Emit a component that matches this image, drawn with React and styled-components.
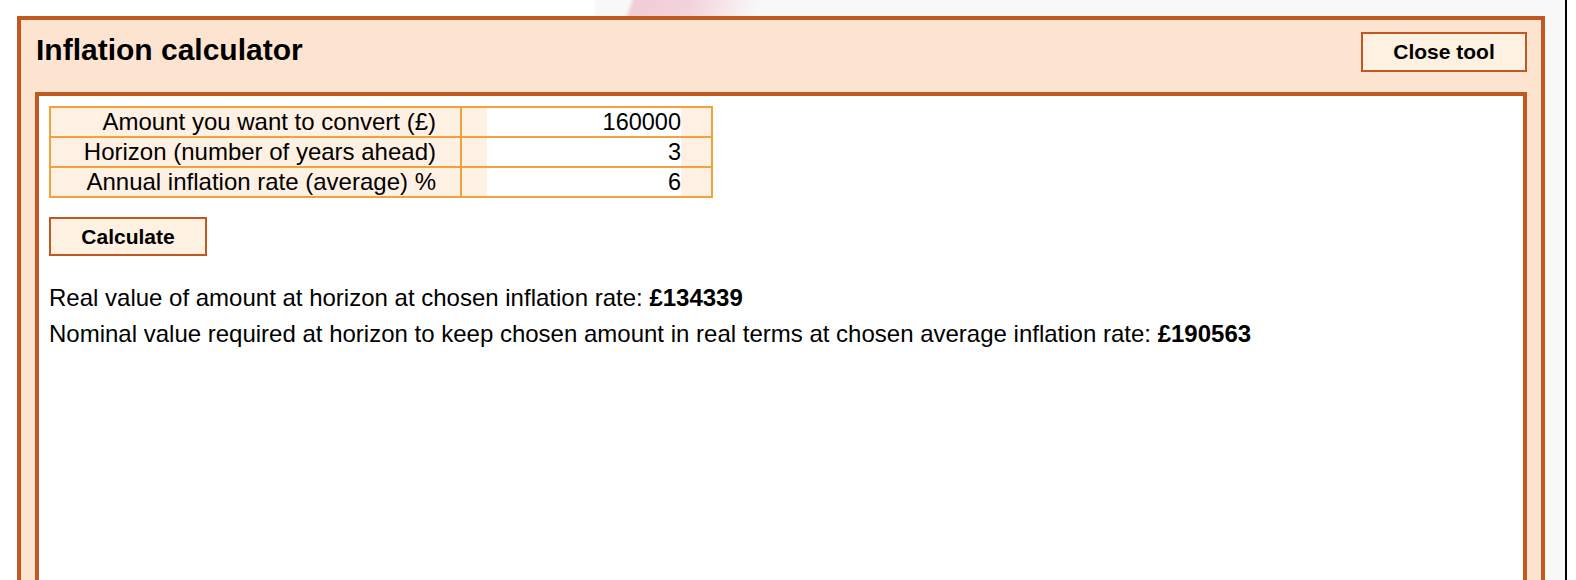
import React from "react";
import styled, { createGlobalStyle } from "styled-components";

const GlobalStyle = createGlobalStyle`
  html, body {
    margin: 0;
    padding: 0;
    overflow: hidden;
  }
  body {
    font-family: "Liberation Sans", Arial, Helvetica, sans-serif;
    color: #000;
  }
  * {
    box-sizing: border-box;
  }
`;

const Page = styled.div`
  height: 100vh;
  padding: 16px 0 0 17px;
  background:
    linear-gradient(110deg, transparent 0, transparent 592px, #f1cdd6 597px, #f3d3db 650px, rgba(248,248,248,0) 715px) no-repeat,
    linear-gradient(to right, #fff 0, #fff 595px, #f8f8f8 595px, #f8f8f8 1565px, #000 1565px, #000 1567px, #fff 1567px);
`;

const Modal = styled.div`
  width: 1528px;
  height: 620px;
  border: 4px solid #c1581f;
  background: #fde4d0;
  padding: 0 14px;
  display: flex;
  flex-direction: column;
`;

const Header = styled.div`
  display: flex;
  justify-content: space-between;
  align-items: flex-start;
  padding: 12px 0 20px 1px;
`;

const Title = styled.h1`
  margin: 1px 0 0;
  font-size: 30px;
  line-height: 34px;
  font-weight: bold;
`;

const ToolButton = styled.button`
  width: ${({ $w }) => $w}px;
  height: ${({ $h }) => $h}px;
  border: 2px solid #c1581f;
  background: #fef1e2;
  font-family: "Liberation Sans", Arial, sans-serif;
  font-weight: bold;
  font-size: 21px;
  color: #000;
  padding: 0;
  cursor: pointer;
`;

const Panel = styled.div`
  flex: 1;
  border: 4px solid #c1581f;
  background: #fff;
  padding: 10px 10px;
`;

const Table = styled.table`
  border-collapse: collapse;
  border: 2px solid #f2a23a;
  font-size: 24px;
`;

const Label = styled.td`
  width: 411px;
  height: 28px;
  padding: 0 24px 0 0;
  text-align: right;
  background: #fef1e3;
  border: 2px solid #f2a23a;
  line-height: 26px;
`;

const ValueCell = styled.td`
  width: 251px;
  padding: 0 28px 0 25px;
  background: #fef1e3;
  border: 2px solid #f2a23a;
`;

const Input = styled.input`
  display: block;
  width: 194px;
  height: 28px;
  border: none;
  outline: none;
  background: #fff;
  padding: 0;
  text-align: right;
  font-family: "Liberation Sans", Arial, sans-serif;
  font-size: 23.5px;
  color: #000;
`;

const Actions = styled.div`
  margin-top: 19px;
`;

const Results = styled.div`
  margin-top: 24px;
  font-size: 24px;
  line-height: 36px;
`;

const ResultLine = styled.p`
  margin: 0;
`;

const rows = [
  { label: "Amount you want to convert (£)", value: "160000" },
  { label: "Horizon (number of years ahead)", value: "3" },
  { label: "Annual inflation rate (average) %", value: "6" },
];

export default function App() {
  return (
    <>
      <GlobalStyle />
      <Page>
        <Modal>
          <Header>
            <Title>Inflation calculator</Title>
            <ToolButton $w={166} $h={40}>Close tool</ToolButton>
          </Header>
          <Panel>
            <Table>
              <tbody>
                {rows.map((r) => (
                  <tr key={r.label}>
                    <Label>{r.label}</Label>
                    <ValueCell>
                      <Input defaultValue={r.value} />
                    </ValueCell>
                  </tr>
                ))}
              </tbody>
            </Table>
            <Actions>
              <ToolButton $w={158} $h={39}>Calculate</ToolButton>
            </Actions>
            <Results>
              <ResultLine>
                Real value of amount at horizon at chosen inflation rate: <b>£134339</b>
              </ResultLine>
              <ResultLine>
                Nominal value required at horizon to keep chosen amount in real terms at chosen average inflation rate: <b>£190563</b>
              </ResultLine>
            </Results>
          </Panel>
        </Modal>
      </Page>
    </>
  );
}
